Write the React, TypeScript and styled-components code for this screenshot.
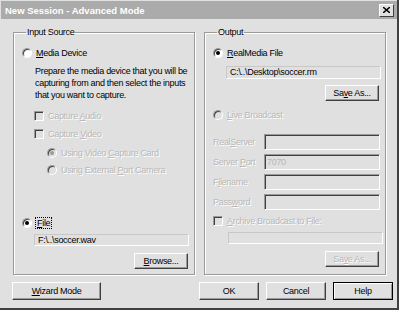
import styled, { createGlobalStyle, css } from "styled-components";

const GlobalStyle = createGlobalStyle`
  html, body {
    margin: 0;
    padding: 0;
    background: #e0e0e0;
  }
  body {
    font-family: "Liberation Sans", Arial, sans-serif;
    font-size: 9px;
    letter-spacing: -0.3px;
    color: #000;
  }
`;

const FACE = "#e0e0e0";
const SHADOW = "#9a9a9a";
const DARK = "#404040";
const HI = "#ffffff";
const DIS = "#b8b8b8";

const Window = styled.div`
  width: 399px;
  height: 310px;
  box-sizing: border-box;
  background: ${FACE};
  border-right: 2px solid ${DARK};
  border-bottom: 2px solid ${DARK};
  display: flex;
  flex-direction: column;
`;

const TitleBar = styled.div`
  height: 18px;
  margin: 1px 0 0 1px;
  background: #ababab;
  display: flex;
  align-items: center;
  justify-content: space-between;
  padding: 0 3px 0 4px;
`;

const Title = styled.span`
  color: #fff;
  font-weight: bold;
  font-size: 9.5px;
  letter-spacing: 0;
`;

const CloseBox = styled.div`
  width: 13px;
  height: 11px;
  background: ${FACE};
  border-top: 1px solid ${HI};
  border-left: 1px solid ${HI};
  border-right: 1px solid ${DARK};
  border-bottom: 1px solid ${DARK};
  display: flex;
  align-items: center;
  justify-content: center;
`;

const Body = styled.div`
  flex: 1;
  display: flex;
  flex-direction: column;
  padding: 8px 11px 0 13px;
`;

const Columns = styled.div`
  display: flex;
  gap: 9px;
`;

const Group = styled.fieldset`
  width: 183px;
  min-inline-size: 0;
  height: 248px;
  box-sizing: border-box;
  margin: 0;
  padding: 6px 0 0 8px;
  border: 1px solid ${SHADOW};
  box-shadow: inset 1px 1px 0 ${HI}, 1px 1px 0 ${HI};
  display: flex;
  flex-direction: column;
`;

const Legend = styled.legend`
  padding: 0 1px;
  margin-left: 4px;
`;

const OptionRow = styled.div<{ $indent?: number; $top?: number }>`
  display: flex;
  align-items: center;
  gap: 4px;
  height: 14px;
  margin-left: ${(p) => p.$indent ?? 0}px;
  margin-top: ${(p) => p.$top ?? 0}px;
`;

const Label = styled.span<{ $disabled?: boolean; $focus?: boolean }>`
  white-space: nowrap;
  ${(p) =>
    p.$disabled &&
    css`
      color: ${DIS};
      text-shadow: 1px 1px 0 ${HI};
    `}
  ${(p) =>
    p.$focus &&
    css`
      outline: 1px dotted #000;
      outline-offset: 0;
      padding: 0 1px;
    `}
`;

const Radio = styled.span<{ $checked?: boolean; $disabled?: boolean }>`
  width: 10px;
  height: 10px;
  box-sizing: border-box;
  border-radius: 50%;
  border: 1px solid;
  border-color: ${SHADOW} ${HI} ${HI} ${SHADOW};
  box-shadow: inset 1px 1px 0 ${DARK};
  background: ${(p) => (p.$disabled ? FACE : HI)};
  display: flex;
  align-items: center;
  justify-content: center;
  flex-shrink: 0;
  &::after {
    content: "";
    width: 4px;
    height: 4px;
    border-radius: 50%;
    background: ${(p) => (p.$disabled ? SHADOW : "#000")};
    display: ${(p) => (p.$checked ? "block" : "none")};
  }
`;

const Check = styled.span<{ $disabled?: boolean }>`
  width: 10px;
  height: 10px;
  box-sizing: border-box;
  border: 1px solid;
  border-color: ${SHADOW} ${HI} ${HI} ${SHADOW};
  box-shadow: inset 1px 1px 0 ${DARK};
  background: ${(p) => (p.$disabled ? FACE : HI)};
  flex-shrink: 0;
`;

const Description = styled.p`
  margin: 5px 0 0 13px;
  line-height: 12px;
  width: 160px;
`;

const PathBox = styled.div<{ $width: number; $indent: number; $top?: number; $height?: number }>`
  width: ${(p) => p.$width}px;
  height: ${(p) => p.$height ?? 12}px;
  box-sizing: border-box;
  margin-left: ${(p) => p.$indent}px;
  margin-top: ${(p) => p.$top ?? 0}px;
  border: 1px solid #c8c8c8;
  border-right-color: ${HI};
  border-bottom-color: ${HI};
  padding: 0 3px;
  line-height: 10px;
  white-space: nowrap;
`;

const ButtonRow = styled.div<{ $top?: number }>`
  display: flex;
  justify-content: flex-end;
  padding-right: 6px;
  margin-top: ${(p) => p.$top ?? 0}px;
`;

const Button = styled.button<{ $width: number; $disabled?: boolean; $default?: boolean; $tall?: boolean }>`
  width: ${(p) => p.$width}px;
  height: ${(p) => (p.$tall ? 18 : 16)}px;
  box-sizing: border-box;
  padding: 0;
  background: ${FACE};
  font: inherit;
  letter-spacing: inherit;
  color: ${(p) => (p.$disabled ? DIS : "#000")};
  text-shadow: ${(p) => (p.$disabled ? `1px 1px 0 ${HI}` : "none")};
  border: 1px solid;
  border-color: ${HI} ${DARK} ${DARK} ${HI};
  box-shadow: inset -1px -1px 0 ${SHADOW};
  ${(p) =>
    p.$default &&
    css`
      outline: 1px solid #000;
      outline-offset: -1px;
      border-color: #000;
      box-shadow: inset 1px 1px 0 ${HI}, inset -1px -1px 0 ${SHADOW};
    `}
`;

const FieldGrid = styled.div`
  display: grid;
  grid-template-columns: 51px 116px;
  row-gap: 4px;
  margin-top: 12px;
  align-items: center;
`;

const Field = styled.div`
  height: 16px;
  box-sizing: border-box;
  border: 1px solid;
  border-color: ${SHADOW} ${HI} ${HI} ${SHADOW};
  box-shadow: inset 1px 1px 0 ${DARK};
  background: ${FACE};
  color: ${DIS};
  padding: 0 2px;
  line-height: 14px;
`;

const Footer = styled.div`
  display: flex;
  align-items: center;
  margin: 7px -7px 0 -1px;
`;

const FooterRight = styled.div`
  margin-left: auto;
  display: flex;
  gap: 7px;
`;

const U = styled.span`
  text-decoration: underline;
  text-underline-offset: 1px;
`;

export default function App() {
  return (
    <>
      <GlobalStyle />
      <Window>
        <TitleBar>
          <Title>New Session - Advanced Mode</Title>
          <CloseBox>
            <svg width="7" height="6" viewBox="0 0 7 6">
              <path d="M0 0 L7 6 M7 0 L0 6" stroke="#000" strokeWidth="1.4" />
            </svg>
          </CloseBox>
        </TitleBar>
        <Body>
          <Columns>
            <Group>
              <Legend>Input Source</Legend>
              <OptionRow $top={3}>
                <Radio />
                <Label>
                  <U>M</U>edia Device
                </Label>
              </OptionRow>
              <Description>
                Prepare the media device that you will be capturing from and then select the inputs
                that you want to capture.
              </Description>
              <OptionRow $indent={12} $top={8}>
                <Check $disabled />
                <Label $disabled>
                  Capture <U>A</U>udio
                </Label>
              </OptionRow>
              <OptionRow $indent={12} $top={4}>
                <Check $disabled />
                <Label $disabled>
                  Capture <U>V</U>ideo
                </Label>
              </OptionRow>
              <OptionRow $indent={25} $top={5}>
                <Radio $disabled $checked />
                <Label $disabled>
                  Using Video <U>C</U>apture Card
                </Label>
              </OptionRow>
              <OptionRow $indent={25} $top={3}>
                <Radio $disabled />
                <Label $disabled>
                  Using External <U>P</U>ort Camera
                </Label>
              </OptionRow>
              <OptionRow $top={39}>
                <Radio $checked />
                <Label $focus>
                  <U>F</U>ile
                </Label>
              </OptionRow>
              <PathBox $width={155} $indent={12} $top={4}>
                F:\..\soccer.wav
              </PathBox>
              <ButtonRow $top={7}>
                <Button $width={54}>
                  <U>B</U>rowse...
                </Button>
              </ButtonRow>
            </Group>
            <Group>
              <Legend>Output</Legend>
              <OptionRow $top={3}>
                <Radio $checked />
                <Label>
                  <U>R</U>ealMedia File
                </Label>
              </OptionRow>
              <PathBox $width={155} $indent={13} $top={6} $height={13}>
                C:\..\Desktop\soccer.rm
              </PathBox>
              <ButtonRow $top={6}>
                <Button $width={54}>
                  Sa<U>v</U>e As...
                </Button>
              </ButtonRow>
              <OptionRow $top={7}>
                <Radio $disabled />
                <Label $disabled>
                  <U>L</U>ive Broadcast
                </Label>
              </OptionRow>
              <FieldGrid>
                <Label $disabled>
                  Real<U>S</U>erver
                </Label>
                <Field />
                <Label $disabled>
                  Server <U>P</U>ort
                </Label>
                <Field>7070</Field>
                <Label $disabled>
                  F<U>i</U>lename
                </Label>
                <Field />
                <Label $disabled>
                  Pass<U>w</U>ord
                </Label>
                <Field />
              </FieldGrid>
              <OptionRow $top={4}>
                <Check $disabled />
                <Label $disabled>
                  <U>A</U>rchive Broadcast to File:
                </Label>
              </OptionRow>
              <PathBox $width={155} $indent={15} $top={4} />
              <ButtonRow $top={7}>
                <Button $width={54} $disabled>
                  Sa<U>v</U>e As...
                </Button>
              </ButtonRow>
            </Group>
          </Columns>
          <Footer>
            <Button $width={89} $tall>
              <U>W</U>izard Mode
            </Button>
            <FooterRight>
              <Button $width={60} $tall>
                OK
              </Button>
              <Button $width={60} $tall>
                Cancel
              </Button>
              <Button $width={60} $tall $default>
                Help
              </Button>
            </FooterRight>
          </Footer>
        </Body>
      </Window>
    </>
  );
}
